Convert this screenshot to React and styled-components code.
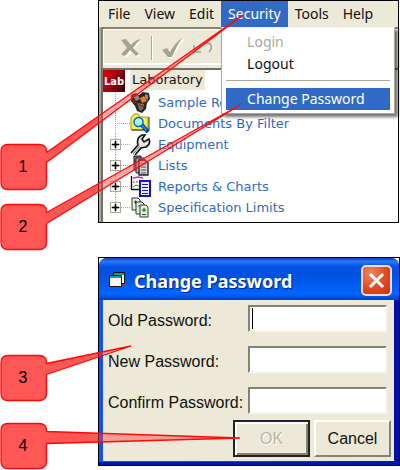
import React from "react";
import styled, { createGlobalStyle, css } from "styled-components";

const Global = createGlobalStyle`
  * { box-sizing: border-box; }
  body { margin: 0; background: #fff; font-family: "Noto Sans", sans-serif; color: #111; }
  button, input { font: inherit; }
`;

const Page = styled.main`
  position: relative;
  padding: 0 0 4px 98px;
  display: flex;
  flex-direction: column;
  gap: 34px;
`;

/* ---------- application window ---------- */

const AppWindow = styled.section`
  margin-right: 1px;
  border: 1px solid #000;
  background: #fff;
`;

const MenuBar = styled.nav`
  display: flex;
  height: 26px;
  padding-left: 2px;
  background: #ece9d8;
`;

const MenuGroup = styled.div`
  position: relative;
`;

const MenuButton = styled.button`
  height: 26px;
  padding: 0 7px;
  border: 0;
  font-size: 14px;
  line-height: 24px;
  background: ${(p) => (p.$open ? "#316ac5" : "transparent")};
  color: ${(p) => (p.$open ? "#fff" : "#111")};
`;

const Dropdown = styled.div`
  position: absolute;
  z-index: 2;
  top: 26px;
  left: 0;
  width: 174px;
  padding: 3px 4px;
  display: flex;
  flex-direction: column;
  background: #fff;
  border: 1px solid #aca899;
  border-top-color: #f4f2e8;
  box-shadow: 3px 3px 3px rgba(0, 0, 0, 0.55);
`;

const MenuItem = styled.button`
  height: 22px;
  padding: 0 21px;
  border: 0;
  text-align: left;
  white-space: nowrap;
  font-size: 14px;
  line-height: 20px;
  background: ${(p) => (p.$active ? "#316ac5" : "transparent")};
  color: ${(p) => (p.$active ? "#fff" : "#111")};

  &:disabled {
    color: #aca899;
  }
`;

const Separator = styled.hr`
  width: 100%;
  margin: 5px 0 7px;
  border: 0;
  border-top: 1px solid #aca899;
`;

const Frame = styled.div`
  border-left: 2px solid #aca899;
  background: #ece9d8;
`;

const ToolbarWell = styled.div`
  border-top: 2px solid #85826f;
  border-left: 2px solid #85826f;
  padding-bottom: 3px;
`;

const Toolbar = styled.div`
  display: flex;
  align-items: center;
  gap: 8px;
  height: 36px;
  padding: 2px 0 0 15px;
  border: 1px solid #fff;
  border-bottom-width: 2px;
`;

const ToolButton = styled.button`
  display: flex;
  padding: 0;
  border: 0;
  background: none;
`;

const Divider = styled.span`
  width: 2px;
  height: 24px;
  background: #aca899;
  border-right: 1px solid #fff;
`;

const Tree = styled.ul`
  list-style: none;
  margin: 0;
  padding: 0 0 4px;
  border-left: 2px solid #716f64;
  border-top: 2px solid #716f64;
  background: #fff;
`;

const treeText = css`
  font-family: "DejaVu Sans", sans-serif;
  font-size: 13px;
  line-height: 20px;
  white-space: nowrap;
`;

const TreeRoot = styled.li`
  display: flex;
  gap: 5px;
  height: 22px;
  ${treeText}
`;

const LabLogo = styled.span`
  width: 22px;
  height: 22px;
  background: linear-gradient(115deg, #e00010, #b00010 40%, #300008);
  color: #fff;
  font: bold 11px/24px "DejaVu Sans Condensed", sans-serif;
  text-align: center;
`;

const RootLabel = styled.span`
  height: 20px;
  padding: 0 2px;
  background: #ece9d8;
`;

const TreeRow = styled.li`
  display: grid;
  grid-template-columns: 27px 21px 1fr;
  align-items: center;
  height: 21px;
  color: #316ac5;
  ${treeText}
`;

const Branch = styled.span`
  display: flex;
`;

const Expander = styled.button`
  display: flex;
  padding: 0;
  border: 0;
  background: none;
`;

const RowLink = styled.a`
  padding-left: 7px;
  color: inherit;
  text-decoration: none;
`;

/* ---------- dialog ---------- */

const Dialog = styled.form`
  border: 1px solid #000;
  background: #fff;
`;

const DialogSkin = styled.div`
  border-radius: 8px 8px 0 0;
  padding: 0 5px 4px 4px;
  background: linear-gradient(90deg, #1650f0, #0a48e8 50%, #0010a0 100%);
  box-shadow: inset 0 -3px #0018b0;
  overflow: hidden;
`;

const TitleBar = styled.header`
  display: flex;
  align-items: center;
  gap: 6px;
  height: 42px;
  margin: 0 -5px 0 -4px;
  padding: 3px 7px 0 10px;
  background: linear-gradient(#0a3cc0, #2a78f8 8%, #0454e4 20%, #0050e0 40%, #0066ff 85%, #0040c8);
`;

const Title = styled.h1`
  flex: 1;
  margin: 0;
  font-size: 18px;
  line-height: 24px;
  white-space: nowrap;
  color: #fff;
  text-shadow: 1px 1px 1px #002080;
`;

const CloseButton = styled.button`
  display: flex;
  align-items: center;
  justify-content: center;
  width: 31px;
  height: 31px;
  padding: 0;
  border: 2px solid #f4d8d4;
  border-radius: 5px;
  background: radial-gradient(circle at 30% 25%, #f08860, #e04820 55%, #c83410);
`;

const Body = styled.div`
  padding: 5px 3px 4px 5px;
  background: #ece9d8;
`;

const Fields = styled.div`
  display: flex;
  flex-direction: column;
  gap: 14px;
  padding-right: 4px;
`;

const Field = styled.label`
  display: grid;
  grid-template-columns: 140px 1fr;
  height: 27px;
  font: 16px/32px "Liberation Sans", sans-serif;
  white-space: nowrap;
`;

const TextBox = styled.input`
  width: 100%;
  height: 27px;
  padding: 0 4px;
  border: 2px solid;
  border-color: #85826f #f8f6ee #f8f6ee #85826f;
  border-radius: 0;
  outline: 0;
  background: #fff;
  ${(p) =>
    p.$caret &&
    css`
      background: linear-gradient(#000, #000) 2px 1px / 1px 21px no-repeat #fff;
    `}
`;

const Actions = styled.div`
  display: flex;
  justify-content: flex-end;
  gap: 4px;
  margin-top: 6px;
`;

const ActionButton = styled.button`
  width: 77px;
  height: 37px;
  padding: 0;
  border: 2px solid;
  border-color: #fff #85826f #85826f #fff;
  background: #ece9d8;
  color: #111;
  font: 16px/32px "Liberation Sans", sans-serif;

  &:disabled {
    border-color: #222;
    color: #bab6a4;
    text-shadow: 1px 1px #fff;
    box-shadow: inset 2px 2px #fff, inset -2px -2px #85826f;
  }
`;

/* ---------- callouts ---------- */

const CalloutLayer = styled.svg`
  position: absolute;
  z-index: 3;
  top: 0;
  left: 0;
  pointer-events: none;
`;

const CalloutNumber = styled.span`
  position: absolute;
  z-index: 4;
  left: 0;
  top: ${(p) => p.$top}px;
  width: 46px;
  text-align: center;
  font: 16px/46px "Liberation Sans", sans-serif;
  color: #000;
`;

const callouts = [
  { n: 1, top: 144, from: 8, to: 18, tip: [243, 15] },
  { n: 2, top: 204, from: 8, to: 19, tip: [240, 105] },
  { n: 3, top: 355, from: 8, to: 19, tip: [131, 346] },
  { n: 4, top: 423, from: 8, to: 20, tip: [240, 438] },
];

function calloutPath({ top, from, to, tip }) {
  const t = top + 0.5;
  return `M8 ${t}H39Q46.5 ${t} 46.5 ${t + 7}V${t + from}L${tip[0]} ${tip[1]}L46.5 ${t + to}V${t + 38}Q46.5 ${t + 45} 39 ${t + 45}H8Q1 ${t + 45} 1 ${t + 38}V${t + 7}Q1 ${t} 8 ${t}Z`;
}

function Callouts() {
  return (
    <>
      <CalloutLayer width="400" height="470" aria-hidden="true">
        <clipPath id="outside"><rect width="98" height="470" /></clipPath>
        <clipPath id="inside"><rect x="98" width="302" height="470" /></clipPath>
        {callouts.map((c) => (
          <g key={c.n}>
            <path d={calloutPath(c)} fill="#ff5656" clipPath="url(#outside)" />
            <path d={calloutPath(c)} fill="#ff4040" fillOpacity=".45" clipPath="url(#inside)" />
            <path d={calloutPath(c)} fill="none" stroke="#ff0808" strokeWidth="1.3" strokeLinejoin="bevel" />
          </g>
        ))}
      </CalloutLayer>
      {callouts.map((c) => (
        <CalloutNumber key={c.n} $top={c.top}>{c.n}</CalloutNumber>
      ))}
    </>
  );
}

/* ---------- icons ---------- */

const CancelIcon = () => (
  <svg width="24" height="22" viewBox="0 0 24 22">
    <path d="M3 3L7 3L12 8Q16 3 22 3Q17 7 14 11L20 18L17 19L12 14Q9 19 5 19L3 17L9 11Z" fill="#fff" transform="translate(1 1)" />
    <path d="M2 3L7 2L12 8Q16 3 22 2Q17 6 14 11L20 17L17 19L11 13Q8 18 5 19L2 17L8 11Z" fill="#a5a193" />
  </svg>
);
const CheckIcon = () => (
  <svg width="23" height="22" viewBox="0 0 23 22">
    <path d="M2 13L7 11L9 15Q14 6 21 1L22 2Q15 10 11 20H7Z" fill="#fff" transform="translate(1 1)" />
    <path d="M1 13L6 11L9 15Q14 6 21 1Q15 10 11 20H7Z" fill="#a5a193" />
  </svg>
);
const UndoIcon = () => (
  <svg width="22" height="16" viewBox="0 0 22 16" fill="none" stroke="#a5a193" strokeWidth="1.6">
    <path d="M2 5V12H9M2 12L9 5Q14 1 18 4Q21 8 17 12" />
  </svg>
);
const BranchIcon = ({ plus, last }) => (
  <svg width="27" height="21" viewBox="0 0 27 21" shapeRendering="crispEdges">
    <path d={`M12.5 0V${last ? 10 : 21}M12 10.5H27`} stroke="#aca899" strokeDasharray="1 1" />
    {plus && (
      <>
        <rect x="7.5" y="5.5" width="10" height="10" fill="#fff" stroke="#aca899" />
        <path d="M9 10H16V11H9ZM12 7H13V14H12Z" fill="#000" stroke="#000" strokeWidth=".6" shapeRendering="auto" />
      </>
    )}
  </svg>
);

const SampleIcon = () => (
  <svg width="21" height="21" viewBox="0 0 21 21">
    <path d="M1 3L6 1L9 3L13 0L19 1L20 7L17 11L16 17L12 21L7 19L5 14L1 9Z" fill="#2a2624" />
    <path d="M3 4L8 3L10 7L6 9ZM15 2L18 3L18 8L15 6Z" fill="#8a8a88" />
    <path d="M7 11L14 12L13 17L10 19Z" fill="#77706a" />
    <path d="M10 6L14 4L17 9L12 11Z" fill="#f07818" />
    <path d="M2 7L6 11M9 13L14 15" stroke="#a02418" strokeWidth="1.4" />
  </svg>
);
const SearchFolderIcon = () => (
  <svg width="21" height="21" viewBox="0 0 21 21">
    <path d="M1 4H2L4 1H8L10 4H18V17H1Z" fill="#f4ee50" stroke="#a09820" />
    <path d="M19 4V17H2" fill="none" stroke="#333" />
    <circle cx="8.5" cy="9" r="4.5" fill="#a8f4fc" stroke="#0868b0" strokeWidth="1.5" />
    <path d="M12 12L18 19" stroke="#002880" strokeWidth="4" />
    <path d="M12 12L17 18" stroke="#1888f0" strokeWidth="2" />
  </svg>
);
const WrenchIcon = () => (
  <svg width="21" height="21" viewBox="0 0 21 21">
    <path d="M1 19L8 11Q6 4 12 1L15 1L12 5L14 8L19 5Q21 10 16 13L11 14L5 21" fill="#e8e8e8" stroke="#111" strokeWidth="1.6" />
    <path d="M3 20L10 12" stroke="#777" />
  </svg>
);
const ListsIcon = () => (
  <svg width="21" height="21" viewBox="0 0 21 21" stroke="#222">
    <path d="M4 1H11V15H4Z" fill="#777" />
    <path d="M6 3H14V18H6Z" fill="#bbb" />
    <path d="M9 5H15L18 8V20H9Z" fill="#d4d4d4" strokeWidth="1.4" />
    <path d="M11 9H16M11 12H16M11 15H16M11 18H16" stroke="#555" />
  </svg>
);
const ChartsIcon = () => (
  <svg width="21" height="21" viewBox="0 0 21 21" fill="none">
    <path d="M1.5 0V13.5H11" stroke="#111" strokeWidth="1.4" />
    <path d="M3 2L8 1L13 2" stroke="#e020e0" strokeWidth="1.5" />
    <path d="M3 6H13" stroke="#e02020" strokeDasharray="2 1" />
    <path d="M3 11L6 9L11 11" stroke="#10b010" />
    <path d="M10 5H20V20H10Z" fill="#eef" stroke="#1414c0" strokeWidth="2" />
    <path d="M12 8.5H18M12 11.5H18M12 14.5H18M12 17.5H18" stroke="#1414c0" />
  </svg>
);
const LimitsIcon = () => (
  <svg width="21" height="21" viewBox="0 0 21 21" fill="#e4eee4" stroke="#333">
    <path d="M2 1H8L10 3V13H2Z" />
    <path d="M6 5H12L14 7V17H6Z" />
    <path d="M10 8H16L18 10V20H10Z" />
    <path d="M4 5H7M5.5 3.5V7M8 9H10M12 13H16M14 11V15M12 17.5H16" stroke="#105810" />
  </svg>
);

const FormIcon = () => (
  <svg width="19" height="17" viewBox="0 0 19 17">
    <path d="M14 4L16 6V11L19 14H14L11 16H4V14Z" fill="#556" />
    <path d="M4.5 .5H15.500V11.5H4.500Z" fill="#fff" stroke="#111" />
    <path d="M5 1H15V3H5Z" fill="#12a0a0" />
    <path d="M.5 3.5H12.500V14.500H.5Z" fill="#fff" stroke="#111" />
    <path d="M1 4H12V6H1Z" fill="#12a0a0" />
  </svg>
);

const rows = [
  { label: "Sample Re", Icon: SampleIcon },
  { label: "Documents By Filter", Icon: SearchFolderIcon },
  { label: "Equipment", Icon: WrenchIcon, plus: true },
  { label: "Lists", Icon: ListsIcon, plus: true },
  { label: "Reports & Charts", Icon: ChartsIcon, plus: true },
  { label: "Specification Limits", Icon: LimitsIcon, plus: true },
];

export default function App() {
  return (
    <Page>
      <Global />
      <AppWindow>
        <MenuBar>
          <MenuButton>File</MenuButton>
          <MenuButton>View</MenuButton>
          <MenuButton>Edit</MenuButton>
          <MenuGroup>
            <MenuButton $open>Security</MenuButton>
            <Dropdown>
              <MenuItem disabled>Login</MenuItem>
              <MenuItem>Logout</MenuItem>
              <Separator />
              <MenuItem $active>Change Password</MenuItem>
            </Dropdown>
          </MenuGroup>
          <MenuButton>Tools</MenuButton>
          <MenuButton>Help</MenuButton>
        </MenuBar>
        <Frame>
          <ToolbarWell>
            <Toolbar>
              <ToolButton aria-label="Cancel changes"><CancelIcon /></ToolButton>
              <Divider />
              <ToolButton aria-label="Accept changes"><CheckIcon /></ToolButton>
              <ToolButton aria-label="Undo"><UndoIcon /></ToolButton>
            </Toolbar>
          </ToolbarWell>
          <Tree>
            <TreeRoot>
              <LabLogo>Lab</LabLogo>
              <RootLabel>Laboratory</RootLabel>
            </TreeRoot>
            {rows.map(({ label, Icon, plus }, i) => (
              <TreeRow key={label}>
                {plus ? (
                  <Expander aria-label={`Expand ${label}`}>
                    <BranchIcon plus last={i === rows.length - 1} />
                  </Expander>
                ) : (
                  <Branch><BranchIcon /></Branch>
                )}
                <Icon />
                <RowLink href="#">{label}</RowLink>
              </TreeRow>
            ))}
          </Tree>
        </Frame>
      </AppWindow>

      <Dialog>
        <DialogSkin>
          <TitleBar>
            <FormIcon />
            <Title>Change Password</Title>
            <CloseButton type="button" aria-label="Close">
              <svg width="19" height="19" viewBox="0 0 19 19">
                <path d="M3 3L16 16M16 3L3 16" stroke="#fff" strokeWidth="3" />
              </svg>
            </CloseButton>
          </TitleBar>
          <Body>
            <Fields>
              <Field>Old Password:<TextBox type="password" $caret /></Field>
              <Field>New Password:<TextBox type="password" /></Field>
              <Field>Confirm Password:<TextBox type="password" /></Field>
            </Fields>
            <Actions>
              <ActionButton disabled>OK</ActionButton>
              <ActionButton type="button">Cancel</ActionButton>
            </Actions>
          </Body>
        </DialogSkin>
      </Dialog>
      <Callouts />
    </Page>
  );
}
